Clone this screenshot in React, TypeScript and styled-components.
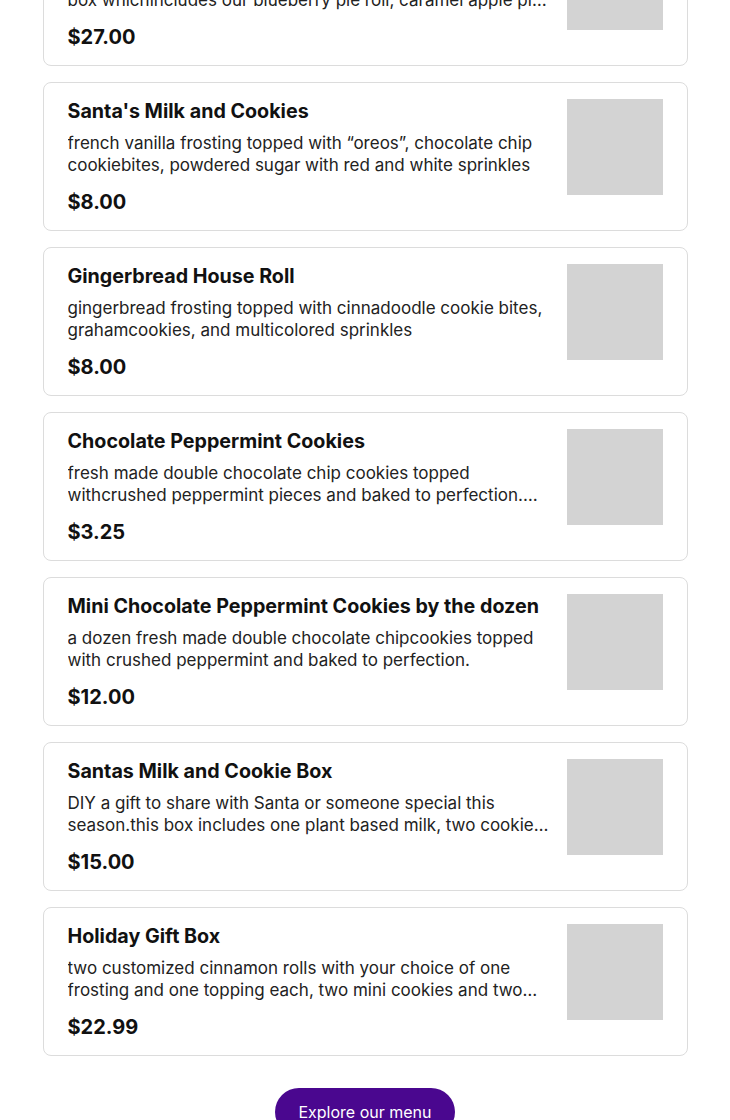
import React from 'react';
import styled, { createGlobalStyle } from 'styled-components';

const GlobalStyle = createGlobalStyle`
  body {
    margin: 0;
    background: #fff;
    font-family: Inter, "Noto Sans", sans-serif;
    color: #111;
  }
`;

const Page = styled.main`
  width: 645px;
  margin: 0 auto;
  margin-top: -83px;
  display: flex;
  flex-direction: column;
  align-items: center;
`;

const List = styled.div`
  width: 100%;
  display: flex;
  flex-direction: column;
  gap: 16px;
`;

const Card = styled.article`
  box-sizing: border-box;
  height: 149px;
  display: flex;
  align-items: flex-start;
  gap: 16px;
  padding: 16px 24px;
  border: 1px solid #dcdcdc;
  border-radius: 8px;
  background: #fff;
`;

const Info = styled.div`
  flex: 1;
  min-width: 0;
  align-self: stretch;
  display: flex;
  flex-direction: column;
  padding-top: 1px;
`;

const Title = styled.h3`
  margin: 0 0 11px;
  font-size: 19.7px;
  line-height: 22px;
  font-weight: 700;
  color: #111;
`;

const Description = styled.p`
  margin: 0;
  font-size: 17px;
  line-height: 21.5px;
  color: #222;
  white-space: pre-line;
  display: -webkit-box;
  -webkit-line-clamp: 2;
  -webkit-box-orient: vertical;
  overflow: hidden;
`;

const Price = styled.div`
  margin-top: auto;
  font-size: 20px;
  line-height: 24px;
  font-weight: 700;
  color: #111;
`;

const Thumb = styled.div`
  flex: none;
  width: 96px;
  height: 96px;
  background: #d3d3d3;
`;

const ExploreButton = styled.button`
  margin-top: 32px;
  width: 180px;
  height: 48px;
  border: none;
  border-radius: 24px;
  background: #4a078f;
  color: #fff;
  font-family: Inter, "Noto Sans", sans-serif;
  font-size: 16px;
  cursor: pointer;
`;

type Item = { title: string; description: string; price: string };

const items: Item[] = [
  {
    title: 'Holiday Pie Roll Sampler',
    description:
      'a sweet way to celebrate the season with our pie roll gift\nbox whichincludes our blueberry pie roll, caramel apple pie roll, and pecan pie roll',
    price: '$27.00',
  },
  {
    title: "Santa's Milk and Cookies",
    description:
      'french vanilla frosting topped with “oreos”, chocolate chip cookiebites, powdered sugar with red and white sprinkles',
    price: '$8.00',
  },
  {
    title: 'Gingerbread House Roll',
    description:
      'gingerbread frosting topped with cinnadoodle cookie bites, grahamcookies, and multicolored sprinkles',
    price: '$8.00',
  },
  {
    title: 'Chocolate Peppermint Cookies',
    description:
      'fresh made double chocolate chip cookies topped withcrushed peppermint pieces and baked to perfection. two cookies per order',
    price: '$3.25',
  },
  {
    title: 'Mini Chocolate Peppermint Cookies by the dozen',
    description:
      'a dozen fresh made double chocolate chipcookies topped with crushed peppermint and baked to perfection.',
    price: '$12.00',
  },
  {
    title: 'Santas Milk and Cookie Box',
    description:
      'DIY a gift to share with Santa or someone special this season.this box includes one plant based milk, two cookies and a card',
    price: '$15.00',
  },
  {
    title: 'Holiday Gift Box',
    description:
      'two customized cinnamon rolls with your choice of one frosting and one topping each, two mini cookies and two mini pie rolls',
    price: '$22.99',
  },
];

const App: React.FC = () => {
  return (
    <>
      <GlobalStyle />
      <Page>
        <List>
          {items.map((item) => (
            <Card key={item.title}>
              <Info>
                <Title>{item.title}</Title>
                <Description>{item.description}</Description>
                <Price>{item.price}</Price>
              </Info>
              <Thumb />
            </Card>
          ))}
        </List>
        <ExploreButton>Explore our menu</ExploreButton>
      </Page>
    </>
  );
};

export default App;
